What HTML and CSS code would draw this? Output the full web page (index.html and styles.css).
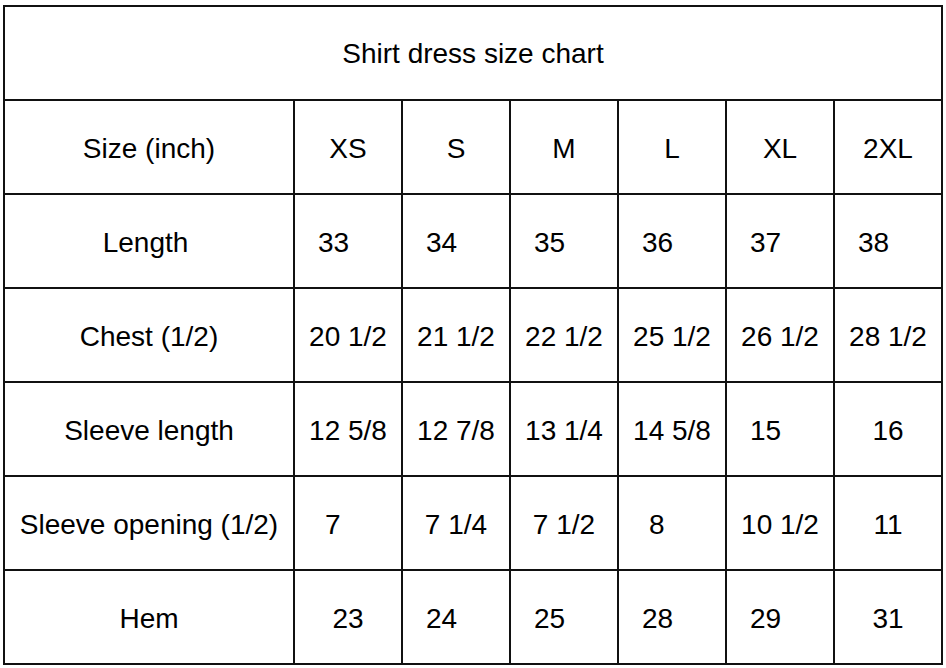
FILE: index.html
```html
<!DOCTYPE html>
<html>
<head>
<meta charset="utf-8">
<link rel="stylesheet" href="styles.css">
</head>
<body>
<div class="chart">
  <div class="cell title">Shirt dress size chart</div>

  <div class="cell c">Size (inch)</div>
  <div class="cell c">XS</div>
  <div class="cell c">S</div>
  <div class="cell c">M</div>
  <div class="cell c">L</div>
  <div class="cell c">XL</div>
  <div class="cell c">2XL</div>

  <div class="cell c trail">Length</div>
  <div class="cell l">33</div>
  <div class="cell l">34</div>
  <div class="cell l">35</div>
  <div class="cell l">36</div>
  <div class="cell l">37</div>
  <div class="cell l">38</div>

  <div class="cell c">Chest (1/2)</div>
  <div class="cell c">20 1/2</div>
  <div class="cell c">21 1/2</div>
  <div class="cell c">22 1/2</div>
  <div class="cell c">25 1/2</div>
  <div class="cell c">26 1/2</div>
  <div class="cell c">28 1/2</div>

  <div class="cell c">Sleeve length</div>
  <div class="cell c">12 5/8</div>
  <div class="cell c">12 7/8</div>
  <div class="cell c">13 1/4</div>
  <div class="cell c">14 5/8</div>
  <div class="cell l">15</div>
  <div class="cell c">16</div>

  <div class="cell c">Sleeve opening (1/2)</div>
  <div class="cell l indent">7</div>
  <div class="cell c">7 1/4</div>
  <div class="cell c">7 1/2</div>
  <div class="cell l indent">8</div>
  <div class="cell c">10 1/2</div>
  <div class="cell c">11</div>

  <div class="cell c">Hem</div>
  <div class="cell c">23</div>
  <div class="cell l">24</div>
  <div class="cell l">25</div>
  <div class="cell l">28</div>
  <div class="cell l">29</div>
  <div class="cell c">31</div>
</div>
</body>
</html>
```

FILE: styles.css
```css
html, body {
  margin: 0;
  padding: 0;
  background: #ffffff;
}

body {
  padding: 5px 0 0 3px;
  font-family: "Liberation Sans", Arial, sans-serif;
  font-size: 28px;
  color: #000000;
}

.chart {
  display: grid;
  grid-template-columns: 288px repeat(6, 106px);
  grid-auto-rows: 92px;
  gap: 2px;
  padding: 2px;
  width: max-content;
  background: #111111;
}

.cell {
  background: #ffffff;
  display: flex;
  align-items: center;
  white-space: nowrap;
  padding-top: 3px;
  box-sizing: border-box;
}

.title {
  grid-column: 1 / -1;
  justify-content: center;
  padding-top: 2px;
}

.c {
  justify-content: center;
}

.l {
  justify-content: flex-start;
  padding-left: 23px;
}

.indent {
  padding-left: 30px;
}

.trail {
  padding-right: 7px;
}
```
